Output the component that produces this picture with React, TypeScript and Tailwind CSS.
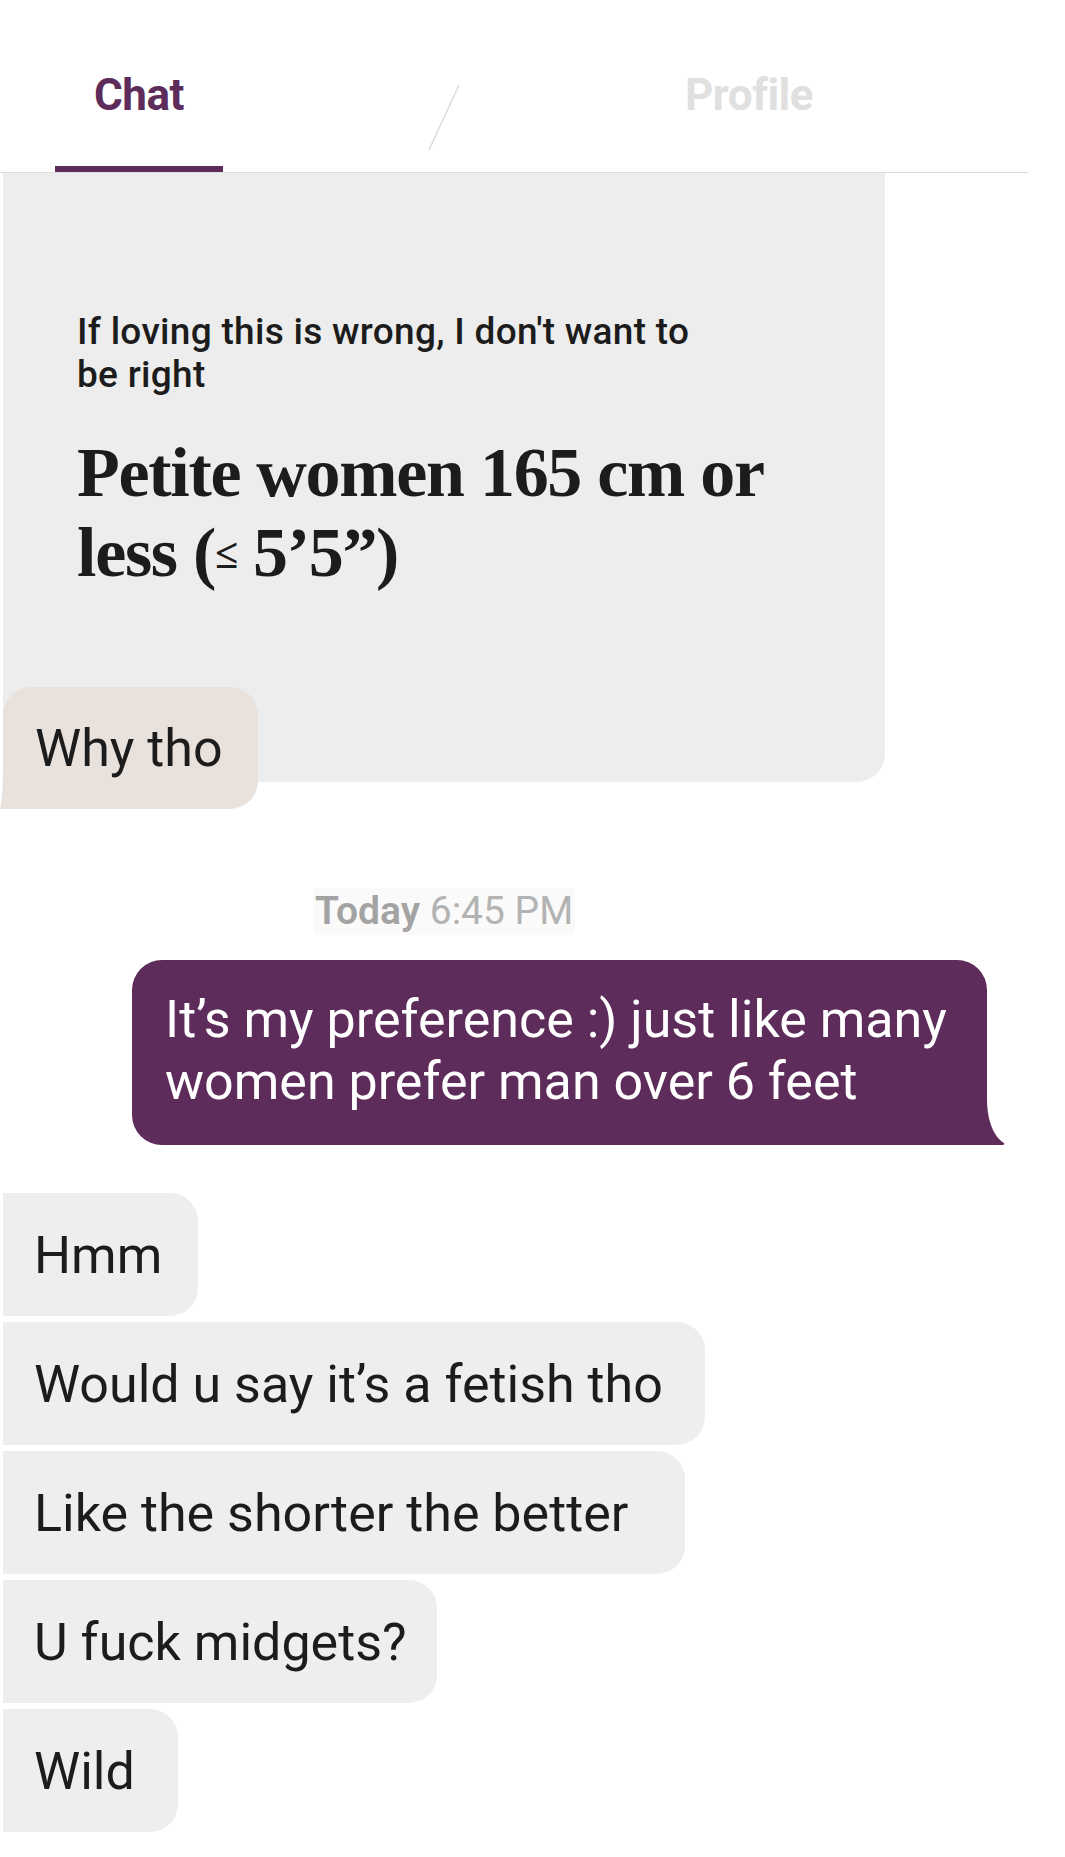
import React from 'react'

const sans = "font-['Roboto','Liberation_Sans',sans-serif]"

function Tail({ color }: { color: string }) {
  // little hook at the bottom-left of the last bubble in a group
  return (
    <svg className="absolute left-0 bottom-0" width="24" height="44" viewBox="0 0 24 44">
      <path d="M3 0 L24 0 L24 44 L0 44 C2 34 3 22 3 0 Z" fill={color} />
    </svg>
  )
}

function Bubble({ text, width, tail = false }: { text: string; width: number; tail?: boolean }) {
  return (
    <div className="relative ml-[3px]" style={{ width }}>
      <div className="h-[123px] rounded-r-[28px] bg-[#eeeeee] pl-[31px] pt-[3px] text-[52px] leading-[120px] text-[#1c1c1c] whitespace-nowrap">
        {text}
      </div>
      {tail && <Tail color="#eeeeee" />}
    </div>
  )
}

export default function App() {
  const incoming = [
    { text: 'Hmm', width: 195 },
    { text: 'Would u say it’s a fetish tho', width: 702 },
    { text: 'Like the shorter the better', width: 682 },
    { text: 'U fuck midgets?', width: 434 },
    { text: 'Wild', width: 175, tail: true },
  ]

  return (
    <div className={`relative w-[1065px] h-[1857px] overflow-hidden bg-white ${sans}`}>
      {/* Top tabs */}
      <header className="relative h-[173px] bg-white">
        <div className="flex h-[172px] items-start">
          <div className="ml-[55px] flex h-full w-[168px] flex-col justify-between">
            <div className="pt-[71px] text-center text-[44px] font-bold leading-[48px] tracking-[-0.5px] text-[#5e2c5a]">
              Chat
            </div>
            <div className="h-[6px] bg-[#5e2c5a]" />
          </div>
          <div className="ml-[462px] pt-[71px] text-[44px] font-bold leading-[48px] tracking-[-0.5px] text-[#e0e0e0]">
            Profile
          </div>
        </div>
        <div className="h-px w-[1028px] bg-[#dddddd]" />
        <svg className="absolute left-[428px] top-[84px]" width="33" height="68" viewBox="0 0 33 68">
          <line x1="31" y1="1" x2="1" y2="66" stroke="#d6d6d6" strokeWidth="1.2" />
        </svg>
      </header>

      {/* Prompt card */}
      <div className="ml-[3px] h-[609px] w-[882px] rounded-br-[28px] bg-[#ededed] pl-[74px] pt-[137px]">
        <p className="text-[37px] font-medium leading-[43px] tracking-[0.3px] text-[#1c1c1c] whitespace-nowrap">
          If loving this is wrong, I don't want to
          <br />
          be right
        </p>
        <h2 className="mt-[37px] font-['Liberation_Serif','Times_New_Roman',serif] text-[70px] font-bold leading-[80px] tracking-[-1.3px] text-[#1c1c1c] whitespace-nowrap">
          Petite women 165 cm or
          <br />
          less (<span className="text-[42px] align-[8px]">≤</span> 5’5”)
        </h2>
      </div>

      {/* Reply to prompt */}
      <div className="relative mt-[-95px] w-[258px]">
        <div className="ml-[3px] h-[122px] rounded-tl-[28px] rounded-r-[28px] bg-[#e9e1dc] pl-[32px] pt-[3px] text-[52px] leading-[118px] text-[#1c1c1c]">
          Why tho
        </div>
        <Tail color="#e9e1dc" />
      </div>

      {/* Timestamp */}
      <div className="mt-[79px] ml-[313px] inline-block bg-[#fafafa] px-[2px] text-[39px] leading-[47px] text-[#b3b3b3]">
        <span className="font-semibold text-[#a3a3a3]">Today</span> 6:45 PM
      </div>

      {/* Outgoing message */}
      <div className="relative ml-[132px] mt-[25px] w-[855px]">
        <div className="h-[185px] rounded-tl-[30px] rounded-tr-[30px] rounded-bl-[30px] bg-[#5e2c5a] pl-[33px] pt-[29px] text-[52px] leading-[62px] text-white whitespace-nowrap">
          It’s my preference :) just like many
          <br />
          women prefer man over 6 feet
        </div>
        <svg className="absolute right-[-18px] bottom-0" width="19" height="46" viewBox="0 0 19 46">
          <path d="M0 0 L1 0 C1 22 8 38 18 44 C18.5 44.5 18 46 17 46 L0 46 Z" fill="#5e2c5a" />
        </svg>
      </div>

      {/* Incoming group */}
      <div className="mt-[48px] flex flex-col gap-[6px]">
        {incoming.map((m) => (
          <Bubble key={m.text} text={m.text} width={m.width} tail={m.tail} />
        ))}
      </div>
    </div>
  )
}
